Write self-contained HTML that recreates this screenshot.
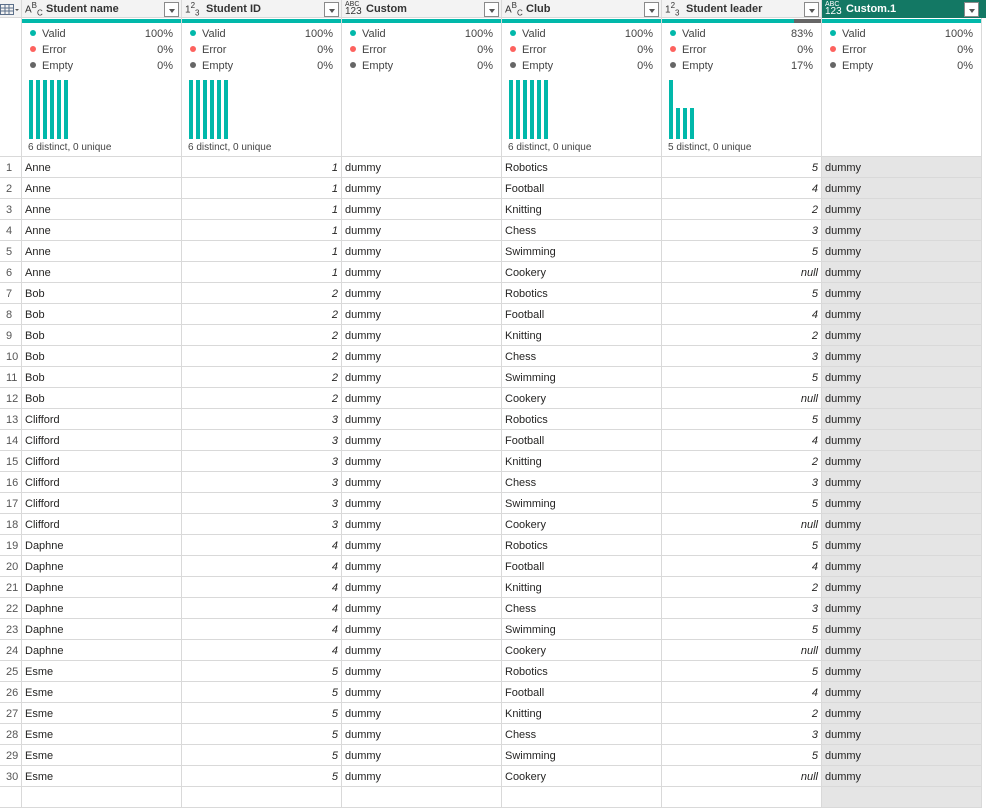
<!DOCTYPE html>
<html><head><meta charset="utf-8"><style>
*{margin:0;padding:0;box-sizing:border-box}
body{width:988px;height:792px;overflow:hidden;background:#fff;font-family:"Liberation Sans",sans-serif;font-size:11px;color:#252423;position:relative}
.hdr{position:absolute;top:0;height:18px;background:#f3f3f3;border-right:1px solid #d9d9d9;border-bottom:1px solid #d9d9d9}
.hdr .t{position:absolute;left:24px;top:3px;font-weight:bold;font-size:11px;color:#333}
.hdr .ic{position:absolute;left:3px;top:1px;font-size:10px;color:#333}
.hdr .dd{position:absolute;right:2px;top:2px;width:15px;height:15px;border:1px solid #8a8a8a;background:#fff}
.hdr .dd:after{content:"";position:absolute;left:4px;top:6px;border-left:3px solid transparent;border-right:3px solid transparent;border-top:4px solid #555}
.prof{position:absolute;top:18px;height:139px;border-right:1px solid #d9d9d9;border-bottom:1px solid #d9d9d9}
.bar{position:absolute;top:1px;left:0;right:0;height:4px;background:#01b8aa}
.st{position:absolute;left:8px;right:8px;height:16px;color:#444}
.st .d{display:inline-block;width:6px;height:6px;border-radius:3px;margin-right:6px;vertical-align:1px}
.st .v{position:absolute;right:0;top:0;color:#444}
.b{position:absolute;width:4px;background:#01b8aa}
.dist{position:absolute;left:6px;top:124px;font-size:10px;color:#444}
.row{position:absolute;left:0;width:988px;height:21px}
.c{position:absolute;top:0;height:21px;border-right:1px solid #d9d9d9;border-bottom:1px solid #d9d9d9;padding:5px 3px 0;white-space:nowrap}
.n{left:0;width:22px;color:#555;padding-left:6px;border-right:1px solid #d9d9d9}
.r{text-align:right;font-style:italic}
.sel{background:#e5e5e5}
</style></head><body>
<div class="hdr" style="left:0;width:22px;"><svg width="22" height="18" style="position:absolute;left:0;top:0"><rect x="0.5" y="4.5" width="13" height="10" fill="none" stroke="#5b6f8a"/><line x1="0" y1="8" x2="14" y2="8" stroke="#5b6f8a"/><line x1="0" y1="11" x2="14" y2="11" stroke="#5b6f8a"/><line x1="5" y1="4" x2="5" y2="15" stroke="#5b6f8a"/><line x1="9" y1="4" x2="9" y2="15" stroke="#5b6f8a"/><path d="M15 9 L19 9 L17 11Z" fill="#555"/></svg></div>
<div class="hdr" style="left:22px;width:160px"><span class="ic">A<sup style="font-size:8px">B</sup><sub style="font-size:8px">C</sub></span><span class="t">Student name</span><span class="dd"></span></div>
<div class="hdr" style="left:182px;width:160px"><span class="ic">1<sup style="font-size:8px">2</sup><sub style="font-size:8px">3</sub></span><span class="t">Student ID</span><span class="dd"></span></div>
<div class="hdr" style="left:342px;width:160px"><span class="ic" style="font-size:7px;line-height:7px;top:1px">ABC<br><span style="font-size:10px">123</span></span><span class="t">Custom</span><span class="dd"></span></div>
<div class="hdr" style="left:502px;width:160px"><span class="ic">A<sup style="font-size:8px">B</sup><sub style="font-size:8px">C</sub></span><span class="t">Club</span><span class="dd"></span></div>
<div class="hdr" style="left:662px;width:160px"><span class="ic">1<sup style="font-size:8px">2</sup><sub style="font-size:8px">3</sub></span><span class="t">Student leader</span><span class="dd"></span></div>
<div class="hdr" style="left:822px;width:164px;background:#137864;border-color:#137864"><span class="ic" style="font-size:7px;line-height:7px;top:1px;color:#fff">ABC<br><span style="font-size:10px">123</span></span><span class="t" style="color:#fff">Custom.1</span><span class="dd" style="right:6px"></span></div>

<div class="prof" style="left:0;width:22px;border-right:1px solid #d9d9d9"></div>

<div class="prof" style="left:22px;width:160px"><div class="bar"></div>
<div class="st" style="top:10px"><span class="d" style="background:#01b8aa"></span>Valid<span class="v">100%</span></div>
<div class="st" style="top:26px"><span class="d" style="background:#fd625e"></span>Error<span class="v">0%</span></div>
<div class="st" style="top:42px"><span class="d" style="background:#666"></span>Empty<span class="v">0%</span></div>
<div class="b" style="left:7px;top:62px;height:59px"></div><div class="b" style="left:14px;top:62px;height:59px"></div><div class="b" style="left:21px;top:62px;height:59px"></div><div class="b" style="left:28px;top:62px;height:59px"></div><div class="b" style="left:35px;top:62px;height:59px"></div><div class="b" style="left:42px;top:62px;height:59px"></div>
<div class="dist">6 distinct, 0 unique</div></div>

<div class="prof" style="left:182px;width:160px"><div class="bar"></div>
<div class="st" style="top:10px"><span class="d" style="background:#01b8aa"></span>Valid<span class="v">100%</span></div>
<div class="st" style="top:26px"><span class="d" style="background:#fd625e"></span>Error<span class="v">0%</span></div>
<div class="st" style="top:42px"><span class="d" style="background:#666"></span>Empty<span class="v">0%</span></div>
<div class="b" style="left:7px;top:62px;height:59px"></div><div class="b" style="left:14px;top:62px;height:59px"></div><div class="b" style="left:21px;top:62px;height:59px"></div><div class="b" style="left:28px;top:62px;height:59px"></div><div class="b" style="left:35px;top:62px;height:59px"></div><div class="b" style="left:42px;top:62px;height:59px"></div>
<div class="dist">6 distinct, 0 unique</div></div>

<div class="prof" style="left:342px;width:160px"><div class="bar"></div>
<div class="st" style="top:10px"><span class="d" style="background:#01b8aa"></span>Valid<span class="v">100%</span></div>
<div class="st" style="top:26px"><span class="d" style="background:#fd625e"></span>Error<span class="v">0%</span></div>
<div class="st" style="top:42px"><span class="d" style="background:#666"></span>Empty<span class="v">0%</span></div></div>

<div class="prof" style="left:502px;width:160px"><div class="bar"></div>
<div class="st" style="top:10px"><span class="d" style="background:#01b8aa"></span>Valid<span class="v">100%</span></div>
<div class="st" style="top:26px"><span class="d" style="background:#fd625e"></span>Error<span class="v">0%</span></div>
<div class="st" style="top:42px"><span class="d" style="background:#666"></span>Empty<span class="v">0%</span></div>
<div class="b" style="left:7px;top:62px;height:59px"></div><div class="b" style="left:14px;top:62px;height:59px"></div><div class="b" style="left:21px;top:62px;height:59px"></div><div class="b" style="left:28px;top:62px;height:59px"></div><div class="b" style="left:35px;top:62px;height:59px"></div><div class="b" style="left:42px;top:62px;height:59px"></div>
<div class="dist">6 distinct, 0 unique</div></div>

<div class="prof" style="left:662px;width:160px"><div class="bar" style="right:26px"></div><div class="bar" style="left:132px;background:#666"></div>
<div class="st" style="top:10px"><span class="d" style="background:#01b8aa"></span>Valid<span class="v">83%</span></div>
<div class="st" style="top:26px"><span class="d" style="background:#fd625e"></span>Error<span class="v">0%</span></div>
<div class="st" style="top:42px"><span class="d" style="background:#666"></span>Empty<span class="v">17%</span></div>
<div class="b" style="left:7px;top:62px;height:59px"></div><div class="b" style="left:14px;top:90px;height:31px"></div><div class="b" style="left:21px;top:90px;height:31px"></div><div class="b" style="left:28px;top:90px;height:31px"></div>
<div class="dist">5 distinct, 0 unique</div></div>

<div class="prof" style="left:822px;width:160px"><div class="bar"></div>
<div class="st" style="top:10px"><span class="d" style="background:#01b8aa"></span>Valid<span class="v">100%</span></div>
<div class="st" style="top:26px"><span class="d" style="background:#fd625e"></span>Error<span class="v">0%</span></div>
<div class="st" style="top:42px"><span class="d" style="background:#666"></span>Empty<span class="v">0%</span></div></div>

<div style="position:absolute;left:0;top:157px">
<div class="row" style="top:0"><div class="c n">1</div><div class="c" style="left:22px;width:160px">Anne</div><div class="c r" style="left:182px;width:160px">1</div><div class="c" style="left:342px;width:160px">dummy</div><div class="c" style="left:502px;width:160px">Robotics</div><div class="c r" style="left:662px;width:160px">5</div><div class="c sel" style="left:822px;width:160px">dummy</div></div>
<div class="row" style="top:21px"><div class="c n">2</div><div class="c" style="left:22px;width:160px">Anne</div><div class="c r" style="left:182px;width:160px">1</div><div class="c" style="left:342px;width:160px">dummy</div><div class="c" style="left:502px;width:160px">Football</div><div class="c r" style="left:662px;width:160px">4</div><div class="c sel" style="left:822px;width:160px">dummy</div></div>
<div class="row" style="top:42px"><div class="c n">3</div><div class="c" style="left:22px;width:160px">Anne</div><div class="c r" style="left:182px;width:160px">1</div><div class="c" style="left:342px;width:160px">dummy</div><div class="c" style="left:502px;width:160px">Knitting</div><div class="c r" style="left:662px;width:160px">2</div><div class="c sel" style="left:822px;width:160px">dummy</div></div>
<div class="row" style="top:63px"><div class="c n">4</div><div class="c" style="left:22px;width:160px">Anne</div><div class="c r" style="left:182px;width:160px">1</div><div class="c" style="left:342px;width:160px">dummy</div><div class="c" style="left:502px;width:160px">Chess</div><div class="c r" style="left:662px;width:160px">3</div><div class="c sel" style="left:822px;width:160px">dummy</div></div>
<div class="row" style="top:84px"><div class="c n">5</div><div class="c" style="left:22px;width:160px">Anne</div><div class="c r" style="left:182px;width:160px">1</div><div class="c" style="left:342px;width:160px">dummy</div><div class="c" style="left:502px;width:160px">Swimming</div><div class="c r" style="left:662px;width:160px">5</div><div class="c sel" style="left:822px;width:160px">dummy</div></div>
<div class="row" style="top:105px"><div class="c n">6</div><div class="c" style="left:22px;width:160px">Anne</div><div class="c r" style="left:182px;width:160px">1</div><div class="c" style="left:342px;width:160px">dummy</div><div class="c" style="left:502px;width:160px">Cookery</div><div class="c r" style="left:662px;width:160px">null</div><div class="c sel" style="left:822px;width:160px">dummy</div></div>
<div class="row" style="top:126px"><div class="c n">7</div><div class="c" style="left:22px;width:160px">Bob</div><div class="c r" style="left:182px;width:160px">2</div><div class="c" style="left:342px;width:160px">dummy</div><div class="c" style="left:502px;width:160px">Robotics</div><div class="c r" style="left:662px;width:160px">5</div><div class="c sel" style="left:822px;width:160px">dummy</div></div>
<div class="row" style="top:147px"><div class="c n">8</div><div class="c" style="left:22px;width:160px">Bob</div><div class="c r" style="left:182px;width:160px">2</div><div class="c" style="left:342px;width:160px">dummy</div><div class="c" style="left:502px;width:160px">Football</div><div class="c r" style="left:662px;width:160px">4</div><div class="c sel" style="left:822px;width:160px">dummy</div></div>
<div class="row" style="top:168px"><div class="c n">9</div><div class="c" style="left:22px;width:160px">Bob</div><div class="c r" style="left:182px;width:160px">2</div><div class="c" style="left:342px;width:160px">dummy</div><div class="c" style="left:502px;width:160px">Knitting</div><div class="c r" style="left:662px;width:160px">2</div><div class="c sel" style="left:822px;width:160px">dummy</div></div>
<div class="row" style="top:189px"><div class="c n">10</div><div class="c" style="left:22px;width:160px">Bob</div><div class="c r" style="left:182px;width:160px">2</div><div class="c" style="left:342px;width:160px">dummy</div><div class="c" style="left:502px;width:160px">Chess</div><div class="c r" style="left:662px;width:160px">3</div><div class="c sel" style="left:822px;width:160px">dummy</div></div>
<div class="row" style="top:210px"><div class="c n">11</div><div class="c" style="left:22px;width:160px">Bob</div><div class="c r" style="left:182px;width:160px">2</div><div class="c" style="left:342px;width:160px">dummy</div><div class="c" style="left:502px;width:160px">Swimming</div><div class="c r" style="left:662px;width:160px">5</div><div class="c sel" style="left:822px;width:160px">dummy</div></div>
<div class="row" style="top:231px"><div class="c n">12</div><div class="c" style="left:22px;width:160px">Bob</div><div class="c r" style="left:182px;width:160px">2</div><div class="c" style="left:342px;width:160px">dummy</div><div class="c" style="left:502px;width:160px">Cookery</div><div class="c r" style="left:662px;width:160px">null</div><div class="c sel" style="left:822px;width:160px">dummy</div></div>
<div class="row" style="top:252px"><div class="c n">13</div><div class="c" style="left:22px;width:160px">Clifford</div><div class="c r" style="left:182px;width:160px">3</div><div class="c" style="left:342px;width:160px">dummy</div><div class="c" style="left:502px;width:160px">Robotics</div><div class="c r" style="left:662px;width:160px">5</div><div class="c sel" style="left:822px;width:160px">dummy</div></div>
<div class="row" style="top:273px"><div class="c n">14</div><div class="c" style="left:22px;width:160px">Clifford</div><div class="c r" style="left:182px;width:160px">3</div><div class="c" style="left:342px;width:160px">dummy</div><div class="c" style="left:502px;width:160px">Football</div><div class="c r" style="left:662px;width:160px">4</div><div class="c sel" style="left:822px;width:160px">dummy</div></div>
<div class="row" style="top:294px"><div class="c n">15</div><div class="c" style="left:22px;width:160px">Clifford</div><div class="c r" style="left:182px;width:160px">3</div><div class="c" style="left:342px;width:160px">dummy</div><div class="c" style="left:502px;width:160px">Knitting</div><div class="c r" style="left:662px;width:160px">2</div><div class="c sel" style="left:822px;width:160px">dummy</div></div>
<div class="row" style="top:315px"><div class="c n">16</div><div class="c" style="left:22px;width:160px">Clifford</div><div class="c r" style="left:182px;width:160px">3</div><div class="c" style="left:342px;width:160px">dummy</div><div class="c" style="left:502px;width:160px">Chess</div><div class="c r" style="left:662px;width:160px">3</div><div class="c sel" style="left:822px;width:160px">dummy</div></div>
<div class="row" style="top:336px"><div class="c n">17</div><div class="c" style="left:22px;width:160px">Clifford</div><div class="c r" style="left:182px;width:160px">3</div><div class="c" style="left:342px;width:160px">dummy</div><div class="c" style="left:502px;width:160px">Swimming</div><div class="c r" style="left:662px;width:160px">5</div><div class="c sel" style="left:822px;width:160px">dummy</div></div>
<div class="row" style="top:357px"><div class="c n">18</div><div class="c" style="left:22px;width:160px">Clifford</div><div class="c r" style="left:182px;width:160px">3</div><div class="c" style="left:342px;width:160px">dummy</div><div class="c" style="left:502px;width:160px">Cookery</div><div class="c r" style="left:662px;width:160px">null</div><div class="c sel" style="left:822px;width:160px">dummy</div></div>
<div class="row" style="top:378px"><div class="c n">19</div><div class="c" style="left:22px;width:160px">Daphne</div><div class="c r" style="left:182px;width:160px">4</div><div class="c" style="left:342px;width:160px">dummy</div><div class="c" style="left:502px;width:160px">Robotics</div><div class="c r" style="left:662px;width:160px">5</div><div class="c sel" style="left:822px;width:160px">dummy</div></div>
<div class="row" style="top:399px"><div class="c n">20</div><div class="c" style="left:22px;width:160px">Daphne</div><div class="c r" style="left:182px;width:160px">4</div><div class="c" style="left:342px;width:160px">dummy</div><div class="c" style="left:502px;width:160px">Football</div><div class="c r" style="left:662px;width:160px">4</div><div class="c sel" style="left:822px;width:160px">dummy</div></div>
<div class="row" style="top:420px"><div class="c n">21</div><div class="c" style="left:22px;width:160px">Daphne</div><div class="c r" style="left:182px;width:160px">4</div><div class="c" style="left:342px;width:160px">dummy</div><div class="c" style="left:502px;width:160px">Knitting</div><div class="c r" style="left:662px;width:160px">2</div><div class="c sel" style="left:822px;width:160px">dummy</div></div>
<div class="row" style="top:441px"><div class="c n">22</div><div class="c" style="left:22px;width:160px">Daphne</div><div class="c r" style="left:182px;width:160px">4</div><div class="c" style="left:342px;width:160px">dummy</div><div class="c" style="left:502px;width:160px">Chess</div><div class="c r" style="left:662px;width:160px">3</div><div class="c sel" style="left:822px;width:160px">dummy</div></div>
<div class="row" style="top:462px"><div class="c n">23</div><div class="c" style="left:22px;width:160px">Daphne</div><div class="c r" style="left:182px;width:160px">4</div><div class="c" style="left:342px;width:160px">dummy</div><div class="c" style="left:502px;width:160px">Swimming</div><div class="c r" style="left:662px;width:160px">5</div><div class="c sel" style="left:822px;width:160px">dummy</div></div>
<div class="row" style="top:483px"><div class="c n">24</div><div class="c" style="left:22px;width:160px">Daphne</div><div class="c r" style="left:182px;width:160px">4</div><div class="c" style="left:342px;width:160px">dummy</div><div class="c" style="left:502px;width:160px">Cookery</div><div class="c r" style="left:662px;width:160px">null</div><div class="c sel" style="left:822px;width:160px">dummy</div></div>
<div class="row" style="top:504px"><div class="c n">25</div><div class="c" style="left:22px;width:160px">Esme</div><div class="c r" style="left:182px;width:160px">5</div><div class="c" style="left:342px;width:160px">dummy</div><div class="c" style="left:502px;width:160px">Robotics</div><div class="c r" style="left:662px;width:160px">5</div><div class="c sel" style="left:822px;width:160px">dummy</div></div>
<div class="row" style="top:525px"><div class="c n">26</div><div class="c" style="left:22px;width:160px">Esme</div><div class="c r" style="left:182px;width:160px">5</div><div class="c" style="left:342px;width:160px">dummy</div><div class="c" style="left:502px;width:160px">Football</div><div class="c r" style="left:662px;width:160px">4</div><div class="c sel" style="left:822px;width:160px">dummy</div></div>
<div class="row" style="top:546px"><div class="c n">27</div><div class="c" style="left:22px;width:160px">Esme</div><div class="c r" style="left:182px;width:160px">5</div><div class="c" style="left:342px;width:160px">dummy</div><div class="c" style="left:502px;width:160px">Knitting</div><div class="c r" style="left:662px;width:160px">2</div><div class="c sel" style="left:822px;width:160px">dummy</div></div>
<div class="row" style="top:567px"><div class="c n">28</div><div class="c" style="left:22px;width:160px">Esme</div><div class="c r" style="left:182px;width:160px">5</div><div class="c" style="left:342px;width:160px">dummy</div><div class="c" style="left:502px;width:160px">Chess</div><div class="c r" style="left:662px;width:160px">3</div><div class="c sel" style="left:822px;width:160px">dummy</div></div>
<div class="row" style="top:588px"><div class="c n">29</div><div class="c" style="left:22px;width:160px">Esme</div><div class="c r" style="left:182px;width:160px">5</div><div class="c" style="left:342px;width:160px">dummy</div><div class="c" style="left:502px;width:160px">Swimming</div><div class="c r" style="left:662px;width:160px">5</div><div class="c sel" style="left:822px;width:160px">dummy</div></div>
<div class="row" style="top:609px"><div class="c n">30</div><div class="c" style="left:22px;width:160px">Esme</div><div class="c r" style="left:182px;width:160px">5</div><div class="c" style="left:342px;width:160px">dummy</div><div class="c" style="left:502px;width:160px">Cookery</div><div class="c r" style="left:662px;width:160px">null</div><div class="c sel" style="left:822px;width:160px">dummy</div></div>
<div class="row" style="top:630px"><div class="c n"></div><div class="c" style="left:22px;width:160px"></div><div class="c" style="left:182px;width:160px"></div><div class="c" style="left:342px;width:160px"></div><div class="c" style="left:502px;width:160px"></div><div class="c" style="left:662px;width:160px"></div><div class="c sel" style="left:822px;width:160px"></div></div>
</div>
</body></html>
